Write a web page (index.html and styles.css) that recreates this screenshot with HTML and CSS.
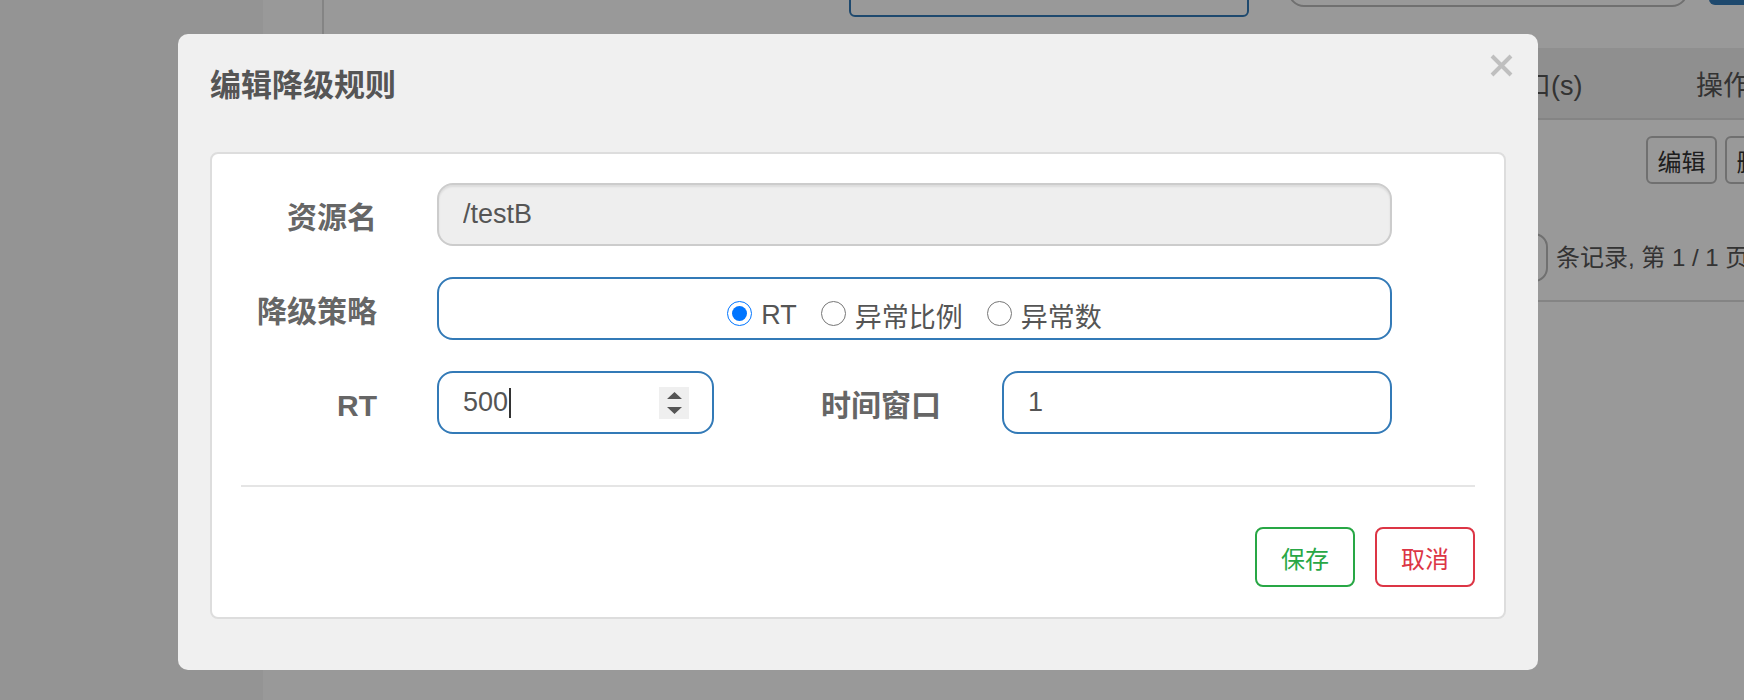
FILE: index.html
```html
<!DOCTYPE html>
<html lang="zh-CN">
<head>
    <meta charset="UTF-8">
    <meta name="viewport" content="width=device-width, initial-scale=1.0">
    <title>编辑降级规则</title>
    <link rel="stylesheet" href="styles.css">
</head>
<body>
    <!-- Página por trás do modal -->
    <div class="page">
        <aside class="sidebar"></aside>
        <div class="content">
            <div class="main">
                <div class="topbar">
                    <div class="toolbar">
                        <div class="search"></div>
                        <div class="select"></div>
                        <div class="btn-primary"></div>
                    </div>
                </div>

                <div class="grid-head">
                    <div class="col-main"></div>
                    <div class="col-window">时间窗口(s)</div>
                    <div class="col-ops head-ops">操作</div>
                </div>
                <div class="grid-row">
                    <div class="col-main"></div>
                    <div class="col-window"></div>
                    <div class="col-ops">
                        <button class="btn-small">编辑</button>
                        <button class="btn-small">删除</button>
                    </div>
                </div>
                <div class="pager">
                    <div class="page-size"></div>
                    <span class="pager-text">条记录, 第 1 / 1 页</span>
                </div>
            </div>
        </div>
    </div>

    <div class="backdrop"></div>

    <!-- Modal -->
    <div class="modal-wrap">
        <div class="modal">
            <div class="modal-header">
                <h4 class="modal-title">编辑降级规则</h4>
                <button class="close" aria-label="关闭">
                    <svg width="23" height="23" viewBox="0 0 23 23"><path d="M2 2L21 21M21 2L2 21" stroke="#bfbfbf" stroke-width="4"/></svg>
                </button>
            </div>
            <div class="modal-body">
                <div class="panel">
                    <div class="form-row">
                        <label class="form-label">资源名</label>
                        <input class="field is-disabled" type="text" value="/testB" disabled>
                    </div>
                    <div class="form-row">
                        <label class="form-label">降级策略</label>
                        <div class="field radio-box">
                            <label class="radio"><input type="radio" name="grade" checked>RT</label>
                            <label class="radio"><input type="radio" name="grade">异常比例</label>
                            <label class="radio"><input type="radio" name="grade">异常数</label>
                        </div>
                    </div>
                    <div class="form-row">
                        <label class="form-label label-rt">RT</label>
                        <div class="field field-rt">
                            <span class="value">500</span><span class="caret"></span>
                            <span class="spinner">
                                <svg width="30" height="32" viewBox="0 0 30 32"><path d="M8 12L15.5 5L23 12Z M8 20L23 20L15.5 27Z" fill="#555"/></svg>
                            </span>
                        </div>
                        <label class="form-label label-window">时间窗口</label>
                        <input class="field field-window" type="text" value="1">
                    </div>

                    <hr class="divider">

                    <div class="actions">
                        <button class="btn btn-save">保存</button>
                        <button class="btn btn-cancel">取消</button>
                    </div>
                </div>
            </div>
        </div>
    </div>
</body>
</html>
```

FILE: styles.css
```css
html, body {
    margin: 0;
    height: 100%;
    overflow: hidden;
}
body {
    font-family: "Liberation Sans", "Noto Sans CJK SC", sans-serif;
    background: #fff;
    color: #333;
}

/* pagina de fundo */
.page {
    display: flex;
    height: 100%;
}
.sidebar {
    width: 263px;
    flex-shrink: 0;
    background: #f7f7f7;
}
.content {
    flex: 1;
    min-width: 0;
    padding-left: 59px;
}
.main {
    height: 100%;
}
.topbar {
    height: 40px;
    border-left: 2px solid #ddd;
}
.toolbar {
    display: flex;
    align-items: flex-end;
    height: 17px;
    overflow: hidden;
    padding-left: 525px;
}
.search {
    width: 400px;
    height: 40px;
    flex-shrink: 0;
    box-sizing: border-box;
    border: 2px solid #337ab7;
    border-radius: 6px;
}
.select {
    width: 400px;
    height: 40px;
    flex-shrink: 0;
    margin-left: 39px;
    margin-bottom: 10px;
    box-sizing: border-box;
    border: 2px solid #bbb;
    border-radius: 16px;
}
.btn-primary {
    width: 100px;
    height: 40px;
    flex-shrink: 0;
    margin-left: 21px;
    margin-bottom: 12px;
    background: #337ab7;
    border-radius: 6px;
}
.grid-head, .grid-row {
    display: flex;
    align-items: center;
    white-space: nowrap;
}
.grid-head {
    margin-top: 8px;
    height: 70px;
    background: #eee;
    border-bottom: 2px solid #ddd;
    font-size: 27px;
    color: #555;
}
.grid-row {
    height: 85px;
    align-items: flex-start;
}
.col-main {
    flex: 1;
}
.col-window {
    width: 193px;
    flex-shrink: 0;
    padding-left: 10px;
}
.col-ops {
    width: 98px;
    flex-shrink: 0;
    display: flex;
    gap: 8px;
    padding-top: 16px;
    padding-left: 10px;
}
.head-ops {
    padding-top: 0;
    padding-left: 60px;
    width: 48px;
}
.btn-small {
    width: 71px;
    height: 48px;
    flex-shrink: 0;
    padding: 0;
    font-family: inherit;
    font-size: 24px;
    color: #333;
    background: #fff;
    border: 2px solid #bbb;
    border-radius: 6px;
}
.pager {
    display: flex;
    height: 97px;
    box-sizing: border-box;
    padding-top: 28px;
    padding-left: 1146px;
    align-items: flex-start;
    border-bottom: 2px solid #ddd;
    white-space: nowrap;
}
.page-size {
    width: 80px;
    height: 49px;
    flex-shrink: 0;
    box-sizing: border-box;
    border: 2px solid #bbb;
    border-radius: 14px;
}
.pager-text {
    margin-left: 8px;
    line-height: 49px;
    font-size: 24px;
    color: #555;
}

/* modal */
.backdrop {
    position: fixed;
    inset: 0;
    background: rgba(0, 0, 0, 0.4);
}
.modal-wrap {
    position: fixed;
    inset: 0;
    padding: 34px 0 0 178px;
}
.modal {
    width: 1360px;
    background: #f0f0f0;
    border-radius: 10px;
}
.modal-header {
    display: flex;
    justify-content: space-between;
    align-items: flex-start;
    padding: 0 25px 0 32px;
}
.modal-title {
    margin: 32px 0 0;
    font-size: 31px;
    line-height: 40px;
    font-weight: bold;
    color: #555;
}
.close {
    margin-top: 20px;
    padding: 0;
    border: none;
    background: none;
    line-height: 0;
}
.modal-body {
    padding: 46px 32px 51px;
}
.panel {
    background: #fff;
    border: 2px solid #ddd;
    border-radius: 8px;
    padding: 29px 29px 30px;
}
.form-row {
    display: flex;
    align-items: center;
    margin-bottom: 31px;
}
.form-label {
    width: 136px;
    margin-right: 60px;
    flex-shrink: 0;
    text-align: right;
    font-size: 30px;
    font-weight: bold;
    color: #666;
}
.label-rt {
    padding-top: 6px;
}
.field {
    width: 955px;
    height: 63px;
    box-sizing: border-box;
    padding: 0 24px;
    border: 2px solid #337ab7;
    border-radius: 16px;
    background: #fff;
    font-family: inherit;
    font-size: 27px;
    color: #555;
    outline: none;
}
.is-disabled {
    background: #eee;
    border-color: #ccc;
    box-shadow: inset 0 2px 2px rgba(0, 0, 0, 0.08);
    color: #555;
    -webkit-text-fill-color: #555;
    opacity: 1;
}
.radio-box {
    display: flex;
    justify-content: center;
    align-items: center;
}
.radio {
    display: inline-flex;
    align-items: center;
    margin: 0 12px;
    padding-top: 14px;
}
.radio input {
    width: 25px;
    height: 25px;
    margin: -4px 9px 0 0;
}
.field-rt {
    width: 277px;
    display: flex;
    align-items: center;
}
.caret {
    width: 2px;
    height: 30px;
    background: #333;
    margin-left: 1px;
}
.spinner {
    margin-left: auto;
    margin-right: -1px;
    width: 30px;
    height: 32px;
    background: #efefef;
    line-height: 0;
}
.label-window {
    width: 227px;
    margin-right: 61px;
}
.field-window {
    width: 390px;
}
.divider {
    margin: 51px 0 40px;
    border: none;
    border-top: 2px solid #e5e5e5;
}
.actions {
    display: flex;
    justify-content: flex-end;
    gap: 20px;
}
.btn {
    width: 100px;
    height: 60px;
    padding: 0;
    background: #fff;
    border: 2px solid;
    border-radius: 8px;
    font-family: "Noto Sans CJK SC", sans-serif;
    font-size: 24px;
}
.btn-save {
    color: #28a745;
    border-color: #28a745;
}
.btn-cancel {
    color: #dc3545;
    border-color: #dc3545;
}
```
